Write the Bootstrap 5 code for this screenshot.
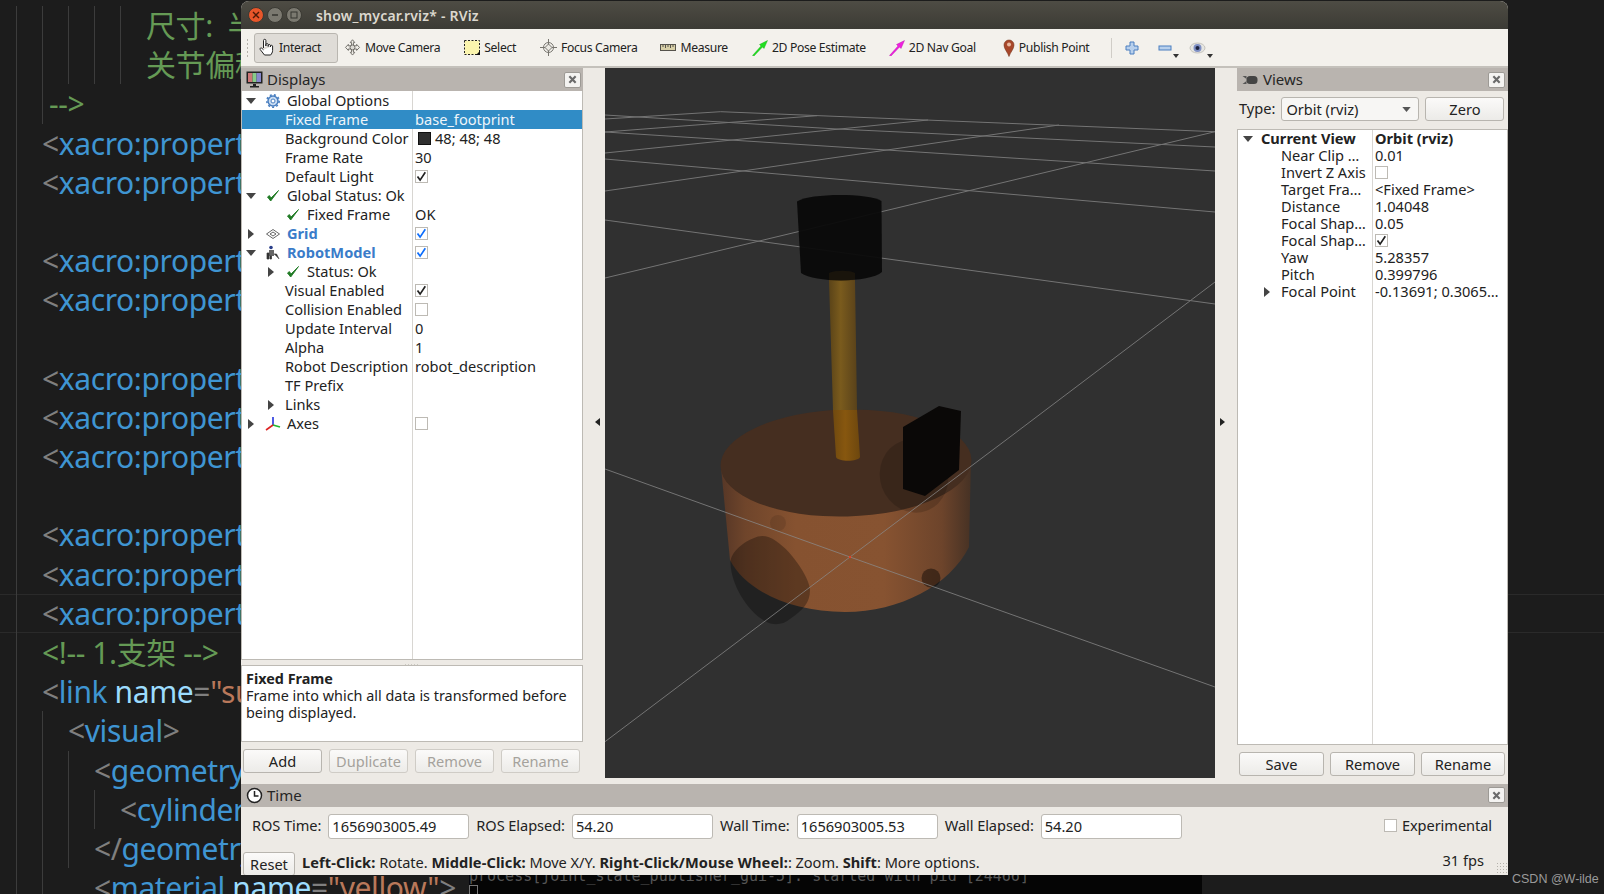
<!DOCTYPE html>
<html lang="en">
<head>
<meta charset="UTF-8">
<title>show_mycar.rviz* - RViz</title>
<link rel="stylesheet" href="https://cdn.jsdelivr.net/npm/bootstrap@5.3.0/dist/css/bootstrap.min.css">
<style>
html, body { height: 100%; }
body { width: 1604px; height: 894px; overflow: hidden; background: #1c1c1c; position: relative; font-family: "Noto Sans", sans-serif; }

/* editor behind the window */
.editor { padding-top: 6px; height: 894px; overflow: hidden; font-family: "Noto Sans", "Noto Sans CJK SC", sans-serif; font-size: 30px; color: #9cdcfe; letter-spacing: -.4px; }
.cline { height: 39.2px; line-height: 39px; padding-left: 16px; white-space: nowrap; display: flex; }
.cline.cur { box-shadow: inset 0 1px 0 #2a2a2a, inset 0 -1px 0 #2a2a2a; }
.ind { flex: 0 0 26px; border-left: 1px solid #3c3c3c; }
.ind.off { border-left-color: transparent; }
.t-b { color: #7f7f7f; } .t-n { color: #3f95d2; } .t-c { color: #659a55; } .t-s { color: #b9785a; }
.term { position: absolute; left: 469px; top: 875px; width: 733px; height: 19px; background: #050505; color: #555; font: 15px/1 "DejaVu Sans Mono", monospace; overflow: hidden; }
.term-text { margin-top: -6px; white-space: nowrap; }
.term-cursor { position: absolute; left: 0; top: 10px; width: 9px; height: 12px; border: 1px solid #777; }
.mark-csdn { position: absolute; left: 1512px; top: 871px; font: 12.5px/16px "Liberation Sans", sans-serif; color: #9a9a9a; }

/* rviz window */
.rviz { position: absolute; left: 241px; top: 1px; width: 1267px; height: 874px; background: #edeae5; border-radius: 8px 8px 0 0; overflow: hidden; color: #222; font-size: 14.6px; display: flex; flex-direction: column; }
.titlebar { flex: 0 0 28px; background: linear-gradient(#4e4c44, #3c3b35); color: #dcd8cf; font-weight: 600; font-size: 14px; padding-left: 7px; gap: 3px; letter-spacing: .2px; }
.wbtn { width: 16px; height: 16px; border-radius: 50%; background: #7b7970; border: 1px solid #3a3933; display: flex; align-items: center; justify-content: center; }
.wbtn.closeb { background: #e8562a; }
.title-txt { margin-left: 11px; }
.toolbar { flex: 0 0 39px; background: #f3f1ec; border-bottom: 2px solid #c4c1bb; font-size: 12.2px; letter-spacing: -.34px; padding-left: 5px; }
.grip { width: 4px; height: 20px; margin-right: 4px; background-image: radial-gradient(#b5b2ab 1px, transparent 1px); background-size: 3px 4px; }
.tbtn { display: flex; align-items: center; height: 30px; white-space: nowrap; gap: 4px; }
.tbtn span { padding-top: 2px; }
.tbtn.on { background: #dfdcd7; border: 1px solid #b9b6b0; border-radius: 3px; padding: 0 16px 0 3px; }
.tsep { width: 1px; height: 20px; background: #d0cdc7; }
.drop { position: relative; }
.drop::after { content: ""; position: absolute; right: -7px; bottom: -3px; border: 3px solid transparent; border-top: 4px solid #333; border-bottom: 0; }

.mainarea { flex: 0 0 713px; display: flex; min-height: 0; }
.dock-l { flex: 0 0 342px; display: flex; flex-direction: column; min-height: 0; }
.dock-r { flex: 0 0 271px; display: flex; flex-direction: column; min-height: 0; }
.gap-l { flex: 0 0 22px; display: flex; align-items: center; justify-content: center; }
.gap-r { flex: 0 0 22px; display: flex; align-items: center; justify-content: center; }
.viewport { flex: 0 0 610px; height: 710px; background: #303030; display: block; }
.tri-l { border: 4px solid transparent; border-right: 5px solid #222; border-left: 0; margin: -5px 0 0 6px; }
.tri-r { border: 4px solid transparent; border-left: 5px solid #222; border-right: 0; margin: -5px 7px 0 0; }
.dock-head { flex: 0 0 23px; background: #b9b4af; display: flex; align-items: center; padding: 0 2px 0 5px; font-size: 15px; gap: 4px; color: #262626; }
.dock-r .dock-head, .timepanel .dock-head { padding-right: 3px; }
.xbtn { margin-left: auto; width: 17px; height: 16px; background: #f4f3f1; border: 1px solid #9d9a95; border-radius: 2px; display: flex; align-items: center; justify-content: center; }

.ptree { background: #fff; border: 1px solid #bdbab4; border-top: 0; position: relative; overflow: hidden; }
.ptree-l { flex: 0 0 569px; }
.ptree-r { flex: 0 0 616px; border-top: 1px solid #bdbab4; margin: 0 0 7px 0; }
.ptree::before { content: ""; position: absolute; top: 0; bottom: 0; width: 1px; background: #d8d6d2; left: var(--split); }
.prow { display: flex; align-items: center; height: 19px; position: relative; white-space: nowrap; line-height: 19px; }
.prow.sel { background: #308cc6; color: #eef5fa; }
.ptree-r .prow { height: 17px; line-height: 17px; }
.pname { flex: 0 0 170px; display: flex; align-items: center; }
.ptree-r .pname { flex-basis: 134px; }
.pval { padding-left: 3px; display: flex; align-items: center; gap: 4px; }
.tw { flex: 0 0 18px; display: flex; justify-content: center; }
.tw-d { border: 5px solid transparent; border-top: 6px solid #444; border-bottom: 0; width: 0; height: 0; }
.tw-r { border: 5px solid transparent; border-left: 6px solid #444; border-right: 0; width: 0; height: 0; }
.ico { flex: 0 0 14px; min-width: 0; margin: 0 7px 0 6px; display: flex; align-items: center; justify-content: center; }
.ico svg { flex: none; }
.lv1 { padding-left: 43px; }
.lv1a { padding-left: 20px; }
.hl { color: #3a7cc9; font-weight: 700; }
.qcheck { width: 13px; height: 13px; border: 1px solid #bdbab4; background: #fff; display: inline-flex; align-items: center; justify-content: center; }
.swatch { width: 13px; height: 13px; background: #303030; border: 1px solid #111; margin-left: 3px; }
.vsplit { flex: 0 0 5px; text-align: center; line-height: 0; overflow: hidden; }
.dots { display: inline-block; width: 16px; height: 2px; margin-top: 1px; background-image: radial-gradient(#aaa7a0 .7px, transparent .8px); background-size: 3px 2px; }
.descbox { flex: 0 0 77px; background: #fff; border: 1px solid #bdbab4; padding: 4px 4px; line-height: 17px; font-size: 14.4px; }
.qbtn { --bs-btn-padding-y: 0; --bs-btn-padding-x: 0; --bs-btn-font-size: 14.6px; --bs-btn-color: #222; --bs-btn-border-color: #b8b5af; --bs-btn-border-radius: 3px; --bs-btn-disabled-color: #a5a29c; --bs-btn-disabled-border-color: #cfccc6; --bs-btn-disabled-opacity: 1; --bs-btn-hover-color: #222; background: linear-gradient(#fbfaf9, #ecebe8); line-height: 22px; height: 24px; }
.dockbtns-l { margin-top: 7px; padding: 0 2px; display: grid; grid-template-columns: repeat(4, 79px); gap: 7px; }
.dockbtns-r { padding: 0 3px 0 2px; display: grid; grid-template-columns: 85px 85px 84px; gap: 6px; }
.typerow { padding: 6px 3px 8px 2px; gap: 6px; flex: 0 0 38px; }
.qcombo { flex: 0 0 138px; height: 24px; padding: 0 0 0 4px; font-size: 14.6px; color: #222; border-color: #b8b5af; border-radius: 3px; background-color: #f7f6f4; line-height: 22px; background-image: url("data:image/svg+xml,%3csvg xmlns='http://www.w3.org/2000/svg' viewBox='0 0 10 6'%3e%3cpath d='M0 0h10L5 6z' fill='%23555'/%3e%3c/svg%3e"); background-size: 9px 5px; background-position: right 7px center; }
.zerob { flex: 0 0 79px; }

.hsplit { flex: 0 0 3px; text-align: center; line-height: 0; overflow: hidden; }
.hsplit .dots { margin-top: 0; }
.timepanel { flex: 1; display: flex; flex-direction: column; min-height: 0; }
.timerow1 { flex: 0 0 43px; padding: 7px 16px 11px 11px; gap: 7px; }
.timerow1 span { letter-spacing: -.07px; }
.qinput { flex: 0 0 141px; width: 141px; height: 25px; padding: 0 3px; font-size: 14.6px; color: #222; border-color: #bdbab4; border-radius: 3px; line-height: 23px; }
.expcheck { margin-right: 5px; }
.timerow2 { padding: 0 24px 0 2px; gap: 7px; flex: 0 0 25px; }
.helptext { margin-bottom: 3px; letter-spacing: -.04px; }
.helptext b { letter-spacing: .1px; }
.fpstext { margin-bottom: 8px; }
.resetb { flex: 0 0 52px; }
.grip-se { position: absolute; right: 1px; bottom: 2px; width: 11px; height: 11px; background-image: radial-gradient(#b5b2ab .7px, transparent .8px); background-size: 3px 3px; }
</style>
</head>
<body>

<svg width="0" height="0" class="position-absolute">
  <symbol id="i-check" viewBox="0 0 14 14"><path d="M1.500 8l3.200 4L12.500 1.500 5 9 3.400 6.600z" fill="#1f7a24" stroke="#1f7a24" stroke-width=".9" stroke-linejoin="round"/></symbol>
  <symbol id="i-tick" viewBox="0 0 11 11"><path d="M1.500 5.500l2.600 3.600L9.300 1.200" fill="none" stroke="currentColor" stroke-width="1.700"/></symbol>
  <symbol id="i-x" viewBox="0 0 10 10"><path d="M1.500 1.500l7 7M8.500 1.500l-7 7" stroke="#6a6a6a" stroke-width="2.400"/></symbol>
  <symbol id="i-move" viewBox="0 0 18 18"><path d="M9 .8l2.400 3H10v3.400h3.400V5.700l3 3.200-3 3.200v-1.500H10v3.500h1.400L9 17l-2.400-2.900H8v-3.500H4.600v1.500l-3-3.200 3-3.200v1.500H8V3.800H6.600z" fill="#f1efe9" stroke="#6d6b66"/><circle cx="9" cy="8.900" r="2.600" fill="#dcdad4" stroke="#6d6b66"/></symbol>
</svg>

<div class="editor">
  <div class="cline"><span class="ind"></span><span class="ind"></span><span class="ind"></span><span class="ind"></span><span class="ind"></span><span class="t-c">尺寸:&nbsp;&nbsp;半径</span></div>
  <div class="cline"><span class="ind"></span><span class="ind"></span><span class="ind"></span><span class="ind"></span><span class="ind"></span><span class="t-c">关节偏移量</span></div>
  <div class="cline"><span class="ind"></span><span class="ind"></span><span class="t-c" style="margin-left:-19px">--&gt;</span></div>
  <div class="cline"><span class="ind"></span><span class="t-b">&lt;</span><span class="t-n">xacro:property</span></div>
  <div class="cline"><span class="ind"></span><span class="t-b">&lt;</span><span class="t-n">xacro:property</span></div>
  <div class="cline"><span class="ind"></span></div>
  <div class="cline"><span class="ind"></span><span class="t-b">&lt;</span><span class="t-n">xacro:property</span></div>
  <div class="cline"><span class="ind"></span><span class="t-b">&lt;</span><span class="t-n">xacro:property</span></div>
  <div class="cline"><span class="ind"></span></div>
  <div class="cline"><span class="ind"></span><span class="t-b">&lt;</span><span class="t-n">xacro:property</span></div>
  <div class="cline"><span class="ind"></span><span class="t-b">&lt;</span><span class="t-n">xacro:property</span></div>
  <div class="cline"><span class="ind"></span><span class="t-b">&lt;</span><span class="t-n">xacro:property</span></div>
  <div class="cline"><span class="ind"></span></div>
  <div class="cline"><span class="ind"></span><span class="t-b">&lt;</span><span class="t-n">xacro:property</span></div>
  <div class="cline"><span class="ind"></span><span class="t-b">&lt;</span><span class="t-n">xacro:property</span></div>
  <div class="cline cur"><span class="ind"></span><span class="t-b">&lt;</span><span class="t-n">xacro:property</span></div>
  <div class="cline"><span class="ind"></span><span class="t-c">&lt;!-- 1.支架 --&gt;</span></div>
  <div class="cline"><span class="ind"></span><span class="t-b">&lt;</span><span class="t-n">link</span>&nbsp;name<span class="t-b">=</span><span class="t-s">"support"</span></div>
  <div class="cline"><span class="ind"></span><span class="ind"></span><span class="t-b">&lt;</span><span class="t-n">visual</span><span class="t-b">&gt;</span></div>
  <div class="cline"><span class="ind"></span><span class="ind"></span><span class="ind"></span><span class="t-b">&lt;</span><span class="t-n">geometry</span><span class="t-b">&gt;</span></div>
  <div class="cline"><span class="ind"></span><span class="ind"></span><span class="ind"></span><span class="ind"></span><span class="t-b">&lt;</span><span class="t-n">cylinder</span></div>
  <div class="cline"><span class="ind"></span><span class="ind"></span><span class="ind"></span><span class="t-b">&lt;/</span><span class="t-n">geometry</span><span class="t-b">&gt;</span></div>
  <div class="cline"><span class="ind"></span><span class="ind"></span><span class="ind off"></span><span class="t-b">&lt;</span><span class="t-n">material</span>&nbsp;name<span class="t-b">=</span><span class="t-s">"yellow"</span><span class="t-b">&gt;</span></div>
</div>

<div class="term">
  <div class="term-text">process[joint_state_publisher_gui-5]: started with pid [24466]</div>
  <span class="term-cursor"></span>
</div>
<div class="mark-csdn">CSDN @W-ilde</div>

<div class="rviz">
  <div class="titlebar d-flex align-items-center">
    <span class="wbtn closeb"><svg width="8" height="8" viewBox="0 0 8 8"><path d="M1 1l6 6M7 1L1 7" stroke="#4a1a08" stroke-width="1.400"/></svg></span>
    <span class="wbtn"><svg width="8" height="8" viewBox="0 0 8 8"><path d="M1 4h6" stroke="#35342f" stroke-width="1.300"/></svg></span>
    <span class="wbtn"><svg width="8" height="8" viewBox="0 0 8 8"><rect x="1" y="1" width="6" height="6" fill="none" stroke="#35342f"/></svg></span>
    <span class="title-txt">show_mycar.rviz* - RViz</span>
  </div>

  <div class="toolbar d-flex align-items-center">
    <span class="grip"></span>
    <div class="tbtn on">
      <svg width="17" height="19" viewBox="0 0 17 19"><path d="M5.500 10V2.500a1.200 1.200 0 0 1 2.400 0V8M7.900 8V6.400a1.200 1.200 0 0 1 2.300 0V8.500M10.200 8.500V7.200a1.200 1.200 0 0 1 2.200 0V9M12.400 9V8a1.200 1.200 0 0 1 2.200 0v4.500c0 2-1 3.200-2 4.500H6.500L2.200 11.500c-.7-1 .6-2.200 1.600-1.300l1.700 1.600" fill="#fff" stroke="#222" stroke-width="1"/></svg>
      <span>Interact</span>
    </div>
    <div class="tbtn" style="margin-left:6px"><svg width="17" height="17"><use href="#i-move"/></svg><span>Move Camera</span></div>
    <div class="tbtn" style="margin-left:24px">
      <svg width="16" height="16" viewBox="0 0 16 16"><rect x=".5" y=".5" width="15" height="14" fill="#fbf5ae" stroke="#222" stroke-dasharray="2 1.500"/><path d="M12 15h4v-4z" fill="#111"/></svg>
      <span>Select</span>
    </div>
    <div class="tbtn" style="margin-left:24px">
      <svg width="17" height="17" viewBox="0 0 17 17"><g fill="none" stroke="#77756f"><circle cx="8.500" cy="8.500" r="5"/><path d="M8.500 0v6M8.500 11v6M0 8.500h6M11 8.500h6"/><path d="M8.500 5l3.500 3.500-3.500 3.500L5 8.500z" fill="#eceae4"/></g></svg>
      <span>Focus Camera</span>
    </div>
    <div class="tbtn" style="margin-left:23px">
      <svg width="16" height="16" viewBox="0 0 16 16"><rect x=".5" y="4.500" width="15" height="6" fill="#d8d0a8" stroke="#55534c"/><path d="M3 5v2M5.500 5v3M8 5v2M10.500 5v3M13 5v2" stroke="#55534c"/></svg>
      <span>Measure</span>
    </div>
    <div class="tbtn" style="margin-left:24px">
      <svg width="16" height="16" viewBox="0 0 16 16"><path d="M.5 15.500L9 6l-1.500-1.500L15.500.5 12 8.500 10.500 7 2 16z" fill="#1fe01f" stroke="#13a313" stroke-width=".4"/></svg>
      <span>2D Pose Estimate</span>
    </div>
    <div class="tbtn" style="margin-left:23px">
      <svg width="16" height="16" viewBox="0 0 16 16"><path d="M.5 15.500L9 6l-1.500-1.500L15.500.5 12 8.500 10.500 7 2 16z" fill="#f01ee0" stroke="#b012a5" stroke-width=".4"/></svg>
      <span>2D Nav Goal</span>
    </div>
    <div class="tbtn" style="margin-left:27px">
      <svg width="12" height="18" viewBox="0 0 12 18"><path d="M6 17.500C4.500 13 1 10 1 6a5 5 0 0 1 10 0c0 4-3.500 7-5 11.500z" fill="#a8472a" stroke="#7a3a22" stroke-width=".6"/><circle cx="6" cy="5.500" r="2" fill="#e9b9a0"/></svg>
      <span>Publish Point</span>
    </div>
    <span class="tsep" style="margin-left:22px"></span>
    <svg style="margin-left:13px" width="14" height="14" viewBox="0 0 14 14"><path d="M5 1h4v4h4v4H9v4H5V9H1V5h4z" fill="#b8d0ec" stroke="#4a7fc0"/></svg>
    <span class="drop d-flex" style="margin-left:19px"><svg width="14" height="14" viewBox="0 0 14 14"><rect x="1" y="5" width="12" height="4" fill="#b8d0ec" stroke="#4a7fc0"/></svg></span>
    <span class="drop d-flex" style="margin-left:17px"><svg width="17" height="14" viewBox="0 0 17 14"><ellipse cx="8.500" cy="7" rx="7.500" ry="5" fill="#e6e6e2" stroke="#c4c2bc"/><circle cx="8.500" cy="7" r="4" fill="#7e8fc4"/><circle cx="8.500" cy="7" r="2" fill="#1d2340"/></svg></span>
  </div>

  <div class="mainarea">
    <div class="dock-l">
      <div class="dock-head">
        <svg width="17" height="17" viewBox="0 0 17 17"><rect x=".5" y=".5" width="16" height="12" fill="#222"/><rect x="2" y="2" width="4.500" height="9" fill="#c77"/><rect x="6.500" y="2" width="4" height="9" fill="#8c8"/><rect x="10.500" y="2" width="4.500" height="9" fill="#88c"/><path d="M7 13h3v2h3v1.500H4V15h3z" fill="#222"/></svg>
        <span>Displays</span>
        <span class="xbtn"><svg width="9" height="9"><use href="#i-x"/></svg></span>
      </div>
      <div class="ptree ptree-l" style="--split:170px">
        <div class="prow"><div class="pname"><span class="tw"><i class="tw-d"></i></span><span class="ico"><svg width="14" height="14" viewBox="0 0 14 14"><circle cx="7" cy="7" r="5" fill="#c9dcf2" stroke="#4a7fc0" stroke-width="1.500"/><circle cx="7" cy="7" r="6.200" fill="none" stroke="#4a7fc0" stroke-width="1.600" stroke-dasharray="2 2.200"/><circle cx="7" cy="7" r="2" fill="#fff" stroke="#4a7fc0"/></svg></span>Global Options</div></div>
        <div class="prow sel"><div class="pname lv1">Fixed Frame</div><div class="pval">base_footprint</div></div>
        <div class="prow"><div class="pname lv1">Background Color</div><div class="pval"><span class="swatch"></span>48; 48; 48</div></div>
        <div class="prow"><div class="pname lv1">Frame Rate</div><div class="pval">30</div></div>
        <div class="prow"><div class="pname lv1">Default Light</div><div class="pval"><span class="qcheck"><svg width="11" height="11"><use href="#i-tick"/></svg></span></div></div>
        <div class="prow"><div class="pname"><span class="tw"><i class="tw-d"></i></span><span class="ico"><svg width="14" height="14"><use href="#i-check"/></svg></span>Global Status: Ok</div></div>
        <div class="prow"><div class="pname lv1a"><span style="width:18px"></span><span class="ico"><svg width="14" height="14"><use href="#i-check"/></svg></span>Fixed Frame</div><div class="pval">OK</div></div>
        <div class="prow"><div class="pname"><span class="tw"><i class="tw-r"></i></span><span class="ico"><svg width="14" height="10" viewBox="0 0 14 10"><path d="M7 .5L13.500 5 7 9.500.5 5zM4 5l3-2 3 2-3 2z" fill="#fff" stroke="#555" stroke-width=".9"/></svg></span><span class="hl">Grid</span></div><div class="pval"><span class="qcheck text-primary"><svg width="11" height="11"><use href="#i-tick"/></svg></span></div></div>
        <div class="prow"><div class="pname"><span class="tw"><i class="tw-d"></i></span><span class="ico"><svg width="15" height="15" viewBox="0 0 15 15"><circle cx="5" cy="2.500" r="1.800" fill="#2b3f8a"/><rect x="3" y="5" width="5" height="6" fill="#666"/><path d="M1 14V8h2v6zM4 14v-3h1.500v3zM8 9h2.500l2.500 5" fill="#333" stroke="#333" stroke-width=".7"/></svg></span><span class="hl">RobotModel</span></div><div class="pval"><span class="qcheck text-primary"><svg width="11" height="11"><use href="#i-tick"/></svg></span></div></div>
        <div class="prow"><div class="pname lv1a"><span class="tw"><i class="tw-r"></i></span><span class="ico"><svg width="14" height="14"><use href="#i-check"/></svg></span>Status: Ok</div></div>
        <div class="prow"><div class="pname lv1">Visual Enabled</div><div class="pval"><span class="qcheck"><svg width="11" height="11"><use href="#i-tick"/></svg></span></div></div>
        <div class="prow"><div class="pname lv1">Collision Enabled</div><div class="pval"><span class="qcheck"></span></div></div>
        <div class="prow"><div class="pname lv1">Update Interval</div><div class="pval">0</div></div>
        <div class="prow"><div class="pname lv1">Alpha</div><div class="pval">1</div></div>
        <div class="prow"><div class="pname lv1">Robot Description</div><div class="pval">robot_description</div></div>
        <div class="prow"><div class="pname lv1">TF Prefix</div></div>
        <div class="prow"><div class="pname lv1a"><span class="tw"><i class="tw-r"></i></span><span style="width:5px"></span>Links</div></div>
        <div class="prow"><div class="pname"><span class="tw"><i class="tw-r"></i></span><span class="ico"><svg width="16" height="16" viewBox="0 0 16 16"><path d="M8 9V1" stroke="#2233dd" stroke-width="1.600"/><path d="M8 9l7 2" stroke="#22bb33" stroke-width="1.600"/><path d="M8 9l-7 5" stroke="#dd2222" stroke-width="1.600"/></svg></span>Axes</div><div class="pval"><span class="qcheck"></span></div></div>
      </div>
      <div class="vsplit"><span class="dots"></span></div>
      <div class="descbox"><div class="fw-bold">Fixed Frame</div>Frame into which all data is transformed before being displayed.</div>
      <div class="dockbtns-l">
        <button class="btn qbtn">Add</button>
        <button class="btn qbtn" disabled>Duplicate</button>
        <button class="btn qbtn" disabled>Remove</button>
        <button class="btn qbtn" disabled>Rename</button>
      </div>
    </div>

    <div class="gap-l"><i class="tri-l"></i></div>

    <svg class="viewport" viewBox="605 68 610 710" width="610" height="710">
      <defs>
        <linearGradient id="bodyg" x1="720" x2="972" y1="0" y2="0" gradientUnits="userSpaceOnUse">
          <stop offset="0" stop-color="#553626"/><stop offset=".1" stop-color="#6f452b"/><stop offset=".3" stop-color="#865230"/><stop offset=".65" stop-color="#875331"/><stop offset=".88" stop-color="#6d442b"/><stop offset="1" stop-color="#453124"/>
        </linearGradient>
        <linearGradient id="poleg" x1="829" x2="858" y1="0" y2="0" gradientUnits="userSpaceOnUse">
          <stop offset="0" stop-color="#5a4318"/><stop offset=".4" stop-color="#7a5b1d"/><stop offset="1" stop-color="#57401a"/>
        </linearGradient>
        <linearGradient id="poleg2" x1="833" x2="860" y1="0" y2="0" gradientUnits="userSpaceOnUse">
          <stop offset="0" stop-color="#70490f"/><stop offset=".45" stop-color="#87570f"/><stop offset="1" stop-color="#6d470e"/>
        </linearGradient>
      </defs>
      <!-- base -->
      <path d="M721 467L730 560C745 590 790 612 845 612C900 612 950 585 969 547L971 460z" fill="url(#bodyg)"/>
      <ellipse cx="846" cy="463" rx="125.500" ry="53.500" transform="rotate(-1.500 846 463)" fill="#452e20"/>
      <ellipse cx="914" cy="476" rx="34" ry="37" transform="rotate(-20 914 476)" fill="#000" opacity=".16"/>
      <circle cx="778" cy="523" r="8" fill="#000" opacity=".1"/>
      <ellipse cx="931" cy="578" rx="9.500" ry="9.500" fill="#000" opacity=".42"/>
      <path d="M730.500 563C730 552 745 541 754 538C760 535 768 535 776 541C794 553 810 580 810 590C810 603 803 610 790 619C783 625 773 626 765 621C748 612 731 585 730.500 563z" fill="#000" opacity=".3"/>
      <!-- pole -->
      <path d="M829 280L855 280L857 410L833 410z" fill="url(#poleg)"/>
      <path d="M833 410L857 410L860 457C858 462 838 462 836 457z" fill="url(#poleg2)"/>
      <!-- grid -->
      <g fill="none" stroke="#8b8b8b" stroke-width="1" opacity=".75">
        <path d="M605 119L720.600 111.700L1215 131.700"/>
        <path d="M605 115L837 129L1215 147"/>
        <path d="M605 132L1215 171"/>
        <path d="M605 159L1215 212"/>
        <path d="M605 220L1215 304"/>
        <path d="M605 132L817 115.700"/>
        <path d="M605 153L928 120"/>
        <path d="M605 191L1059 125"/>
        <path d="M605 278L1215 131.700"/>
        <path d="M605 741.700L850 557L1006 440L1215 282"/>
        <path d="M605 469L850 557L1215 687"/>
      </g>
      <rect x="849" y="556" width="2" height="2" fill="#e0402a"/>
      <!-- lidar and camera -->
      <path d="M797 201.500C810 193 868 193 881.500 201L882 272C870 283 815 283 801 273z" fill="#0a0a0a" opacity=".95"/>
      <path d="M829 273C835 270 850 270 855 273L855 280C848 281 836 281 829 280z" fill="#3a2a0e" opacity=".3"/>
      <path d="M903 427L939 406L961 411L959 470L925 496L903 489z" fill="#0a0807"/>
    </svg>

    <div class="gap-r"><i class="tri-r"></i></div>

    <div class="dock-r">
      <div class="dock-head">
        <svg width="17" height="10" viewBox="0 0 16 10"><path d="M0 1l4 3V1h-.5zM0 9l4-3v3z" fill="#555"/><rect x="4" y="1" width="11" height="8" rx="3.500" fill="#444"/></svg>
        <span>Views</span>
        <span class="xbtn"><svg width="9" height="9"><use href="#i-x"/></svg></span>
      </div>
      <div class="typerow d-flex align-items-center">
        <span>Type:</span>
        <select class="form-select qcombo"><option>Orbit (rviz)</option></select>
        <button class="btn qbtn zerob">Zero</button>
      </div>
      <div class="ptree ptree-r" style="--split:134px">
        <div class="prow fw-bold"><div class="pname"><span class="tw" style="margin-left:1px"><i class="tw-d"></i></span><span style="width:4px"></span>Current View</div><div class="pval">Orbit (rviz)</div></div>
        <div class="prow"><div class="pname lv1">Near Clip …</div><div class="pval">0.01</div></div>
        <div class="prow"><div class="pname lv1">Invert Z Axis</div><div class="pval"><span class="qcheck"></span></div></div>
        <div class="prow"><div class="pname lv1">Target Fra…</div><div class="pval">&lt;Fixed Frame&gt;</div></div>
        <div class="prow"><div class="pname lv1">Distance</div><div class="pval">1.04048</div></div>
        <div class="prow"><div class="pname lv1">Focal Shap…</div><div class="pval">0.05</div></div>
        <div class="prow"><div class="pname lv1">Focal Shap…</div><div class="pval"><span class="qcheck"><svg width="11" height="11"><use href="#i-tick"/></svg></span></div></div>
        <div class="prow"><div class="pname lv1">Yaw</div><div class="pval">5.28357</div></div>
        <div class="prow"><div class="pname lv1">Pitch</div><div class="pval">0.399796</div></div>
        <div class="prow"><div class="pname lv1a"><span class="tw"><i class="tw-r"></i></span><span style="width:5px"></span>Focal Point</div><div class="pval">-0.13691; 0.3065…</div></div>
      </div>
      <div class="dockbtns-r">
        <button class="btn qbtn">Save</button>
        <button class="btn qbtn">Remove</button>
        <button class="btn qbtn">Rename</button>
      </div>
    </div>
  </div>

  <div class="hsplit"><span class="dots"></span></div>

  <div class="timepanel">
    <div class="dock-head" style="flex-basis:22px">
      <svg width="17" height="17" viewBox="0 0 17 17"><circle cx="8.500" cy="8.500" r="7" fill="#fff" stroke="#222" stroke-width="1.500"/><path d="M8.500 4v5h4" fill="none" stroke="#222" stroke-width="1.500"/></svg>
      <span>Time</span>
      <span class="xbtn"><svg width="9" height="9"><use href="#i-x"/></svg></span>
    </div>
    <div class="timerow1 d-flex align-items-center">
      <span>ROS Time:</span><input class="form-control qinput" value="1656903005.49">
      <span>ROS Elapsed:</span><input class="form-control qinput" value="54.20">
      <span>Wall Time:</span><input class="form-control qinput" value="1656903005.53">
      <span>Wall Elapsed:</span><input class="form-control qinput" value="54.20">
      <span class="ms-auto d-flex align-items-center"><span class="qcheck expcheck"></span>Experimental</span>
    </div>
    <div class="timerow2 d-flex align-items-center">
      <button class="btn qbtn resetb">Reset</button>
      <span class="helptext"><b>Left-Click:</b> Rotate. <b>Middle-Click:</b> Move X/Y. <b>Right-Click/Mouse Wheel:</b>: Zoom. <b>Shift</b>: More options.</span>
      <span class="ms-auto fpstext">31 fps</span>
    </div>
  </div>
  <span class="grip-se"></span>
</div>

<script src="https://cdn.jsdelivr.net/npm/bootstrap@5.3.0/dist/js/bootstrap.bundle.min.js"></script>
</body>
</html>
